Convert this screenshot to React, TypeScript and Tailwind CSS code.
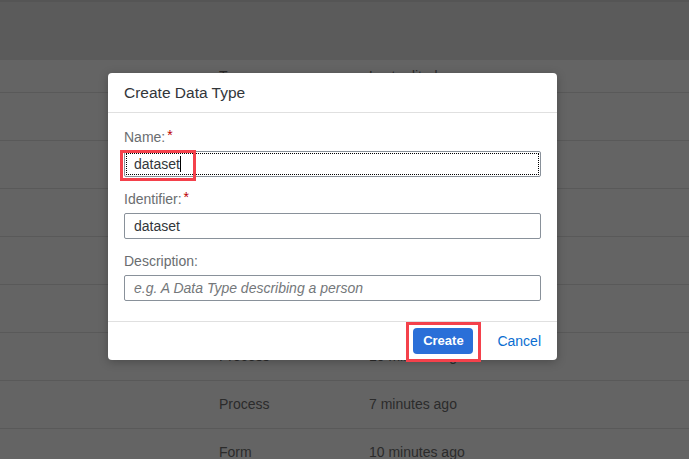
import React from 'react';

interface Row {
  type: string;
  edited: string;
}

const rows: Row[] = [
  { type: 'Form', edited: '1 minute ago' },
  { type: 'Process', edited: '2 minutes ago' },
  { type: 'Form', edited: '3 minutes ago' },
  { type: 'Process', edited: '5 minutes ago' },
  { type: 'Form', edited: '6 minutes ago' },
  { type: 'Process', edited: '10 minutes ago' },
  { type: 'Process', edited: '7 minutes ago' },
  { type: 'Form', edited: '10 minutes ago' },
];

const Field: React.FC<{ label: string; required?: boolean; children: React.ReactNode }> = ({
  label,
  required,
  children,
}) => (
  <div>
    <div className="h-[20px] text-[14px] leading-[20px] text-[#6a6d70] mb-[4px]">
      {label}
      {required && <span className="text-[#bb0000] ml-[2px] relative -top-[2px]">*</span>}
    </div>
    {children}
  </div>
);

const App: React.FC = () => {
  return (
    <div
      className="relative w-full h-[459px] overflow-hidden bg-[#646464] text-[#2b2b2b]"
      style={{ fontFamily: '"Liberation Sans", Arial, sans-serif' }}
    >
      {/* page behind the overlay */}
      <div className="h-[60px] bg-[#5b5b5b] border-t-[2px] border-[#555555]" />
      <div className="h-[33px] flex items-center border-b border-[#595959] text-[14px]">
        <span className="ml-[219px] w-[150px]">Type</span>
        <span>Last edited</span>
      </div>
      {rows.map((row, i) => (
        <div key={i} className="h-[48px] flex items-center border-b border-[#595959] text-[14px]">
          <span className="ml-[219px] w-[150px]">{row.type}</span>
          <span>{row.edited}</span>
        </div>
      ))}

      {/* dialog */}
      <div className="absolute left-[108px] top-[73px] w-[449px] bg-white rounded-[4px] shadow-[0_2px_10px_rgba(0,0,0,0.25)] text-[#32363a]">
        <div className="h-[40px] border-b border-[#e0e0e0] px-[16px] flex items-center text-[15.5px] pt-[1px]">
          Create Data Type
        </div>
        <div className="px-[16px] pt-[14px] pb-[20px] flex flex-col gap-[12px]">
          <Field label="Name:" required>
            <div className="relative h-[26px] border border-[#89919a] rounded-[2px] p-[1px]">
              <div className="h-full border border-dotted border-black flex items-center pl-[7px] text-[14px]">
                dataset
                <span className="w-[1px] h-[16px] bg-black" />
              </div>
              <div className="absolute left-[-5px] top-[-2px] w-[76px] h-[31px] border-[3px] border-[#f4414b]" />
            </div>
          </Field>
          <Field label="Identifier:" required>
            <div className="h-[26px] border border-[#89919a] rounded-[2px] flex items-center pl-[9px] text-[14px]">
              dataset
            </div>
          </Field>
          <Field label="Description:">
            <div className="h-[26px] border border-[#89919a] rounded-[2px] flex items-center pl-[9px] text-[14px] italic text-[#74777a]">
              e.g. A Data Type describing a person
            </div>
          </Field>
        </div>
        <div className="h-[39px] border-t border-[#e0e0e0] flex items-center justify-end pr-[16px] gap-[24px]">
          <div className="relative">
            <button className="h-[26px] w-[60px] rounded-[4px] bg-[#2a6fd8] text-white text-[13px] font-bold">
              Create
            </button>
            <div className="absolute left-[-7px] top-[-6px] w-[75px] h-[40px] border-[3px] border-[#f4414b]" />
          </div>
          <button className="text-[14px] text-[#0a6ed1]">Cancel</button>
        </div>
      </div>
    </div>
  );
};

export default App;
